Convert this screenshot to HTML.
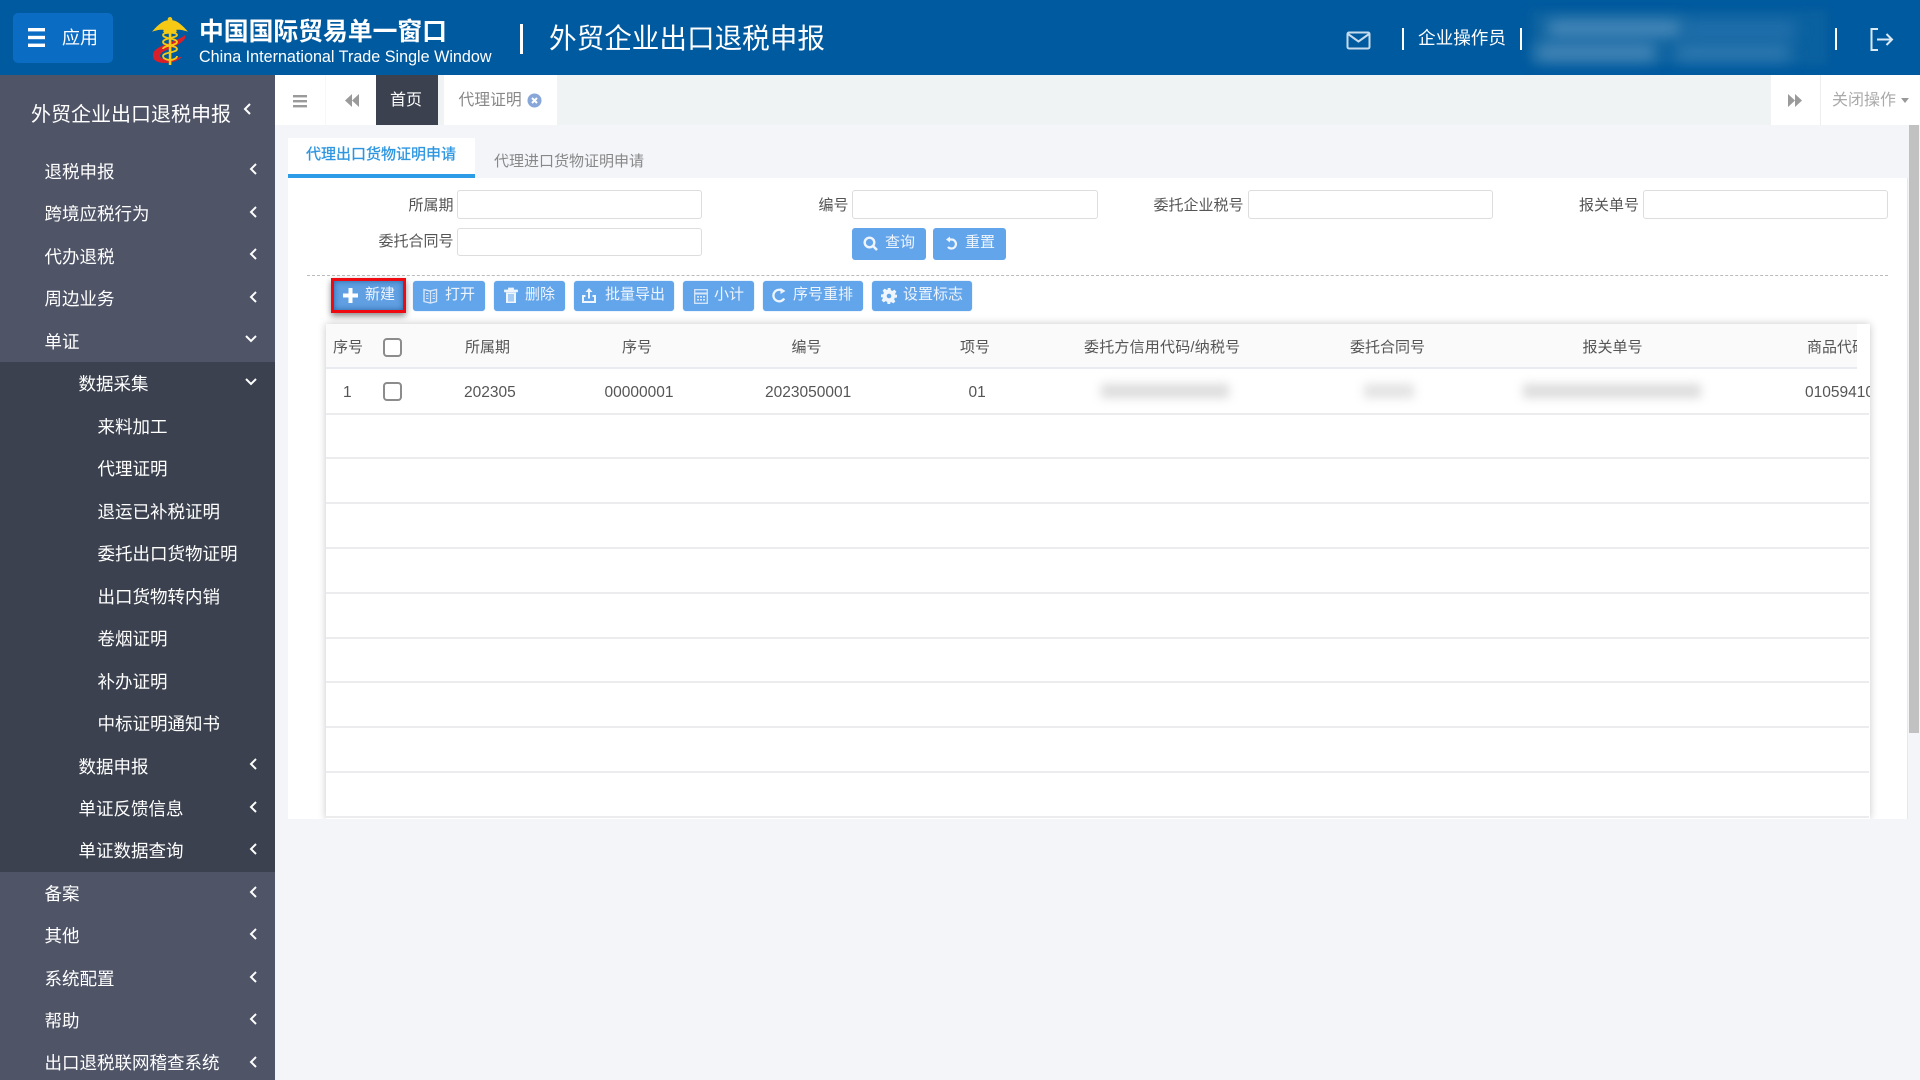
<!DOCTYPE html>
<html lang="zh"><head><meta charset="utf-8"><title>外贸企业出口退税申报</title>
<style>
*{box-sizing:border-box}
html,body{margin:0;padding:0;width:1920px;height:1080px;overflow:hidden;background:#f3f5f9;font-family:"Liberation Sans","Noto Sans CJK SC",sans-serif}
.a{position:absolute}
.t{position:absolute;white-space:nowrap;line-height:20px;height:20px}
.m{position:absolute;white-space:nowrap;line-height:24px;height:24px;color:#fff;font-size:17.5px}
.ch{position:absolute;left:249px;width:9px;height:14px}
.ch2{position:absolute;left:244px;width:14px;height:9px}
.inp{position:absolute;background:#fff;border:1px solid #ddd;border-radius:3px}
.lb{position:absolute;white-space:nowrap;font-size:15px;line-height:20px;color:#555;text-align:right}
.b{position:absolute;background:#63a5ea;border-radius:3px;top:281px;height:30px;box-shadow:0 0 1px #8ab8ea}
.bt{position:absolute;white-space:nowrap;color:#eef5fd;font-size:15px;line-height:20px;top:285px}
.ic{position:absolute}
.th{position:absolute;top:338px;font-size:15px;line-height:20px;color:#555;white-space:nowrap}
.td{position:absolute;top:383px;font-size:15.5px;line-height:20px;color:#555;white-space:nowrap}
.row{position:absolute;left:326px;width:1543px;height:2px;background:#ececee}
.cb{position:absolute;left:383px;width:19px;height:19px;border:2px solid #8c8c8c;border-radius:4px;background:#fff}
</style></head><body>

<!-- header -->
<div class="a" style="left:0;top:0;width:1920px;height:75px;background:#005a9f"></div>
<div class="a" style="left:13px;top:13px;width:100px;height:50px;background:#0b6cc4;border-radius:5px"></div>
<svg class="a" style="left:27px;top:27px" width="20" height="21" viewBox="0 0 20 21"><rect x="1" y="1" width="17" height="3.4" fill="#fff"/><rect x="1" y="8.8" width="17" height="3.4" fill="#fff"/><rect x="1" y="16.6" width="17" height="3.4" fill="#fff"/></svg>
<div class="t" style="left:62px;top:28px;font-size:18px;color:#fff">应用</div>

<svg class="a" style="left:150px;top:15px" width="40" height="52" viewBox="0 0 40 52">
<path d="M20 2c1.600 0 2.600 1.500 2.300 3.200 4 .3 9 3.500 15.700 11.600-5-1.600-8-2.400-12-1.800 1 .8 1 1.800 0 2.500h-12c-1-.7-1-1.700 0-2.500-4-.6-7 .2-12 1.800C8.700 8.700 13.700 5.500 17.700 5.200 17.400 3.500 18.400 2 20 2z" fill="#f6c915"/>
<path d="M35 20c2 4-4 8-11 12-7 3-14 5-14 9 0 3 6 4 12 3 5-1 8-2 10-2-4 4-11 6-17 6-8 0-13-3-12-9 1-5 8-8 16-11 7-3 13-5 16-8z" fill="#d81f2a"/>
<rect x="18.800" y="14" width="2.600" height="36" fill="#f6c915"/>
<path d="M13 20c0-3 14-3 14 0s-14 3-14 7 14 3 14 7-14 3-14 7c0 3 5 4 7 4M27 27c0-4-14-3-14-7M13 34c0-4 14-3 14-7M13 41c0-4 14-3 14-7M27 41c0 3-5 4-7 4" fill="none" stroke="#f6c915" stroke-width="1.800"/>
</svg>
<div class="t" style="left:199px;top:19px;height:28px;line-height:28px;font-size:24.800px;font-weight:700;color:#fff">中国国际贸易单一窗口</div>
<div class="t" style="left:199px;top:47px;font-size:16.150px;color:#fff">China International Trade Single Window</div>
<div class="a" style="left:520px;top:24px;width:3px;height:30px;background:#fff"></div>
<div class="t" style="left:549px;top:21px;height:36px;line-height:36px;font-size:27.600px;color:#fff">外贸企业出口退税申报</div>

<svg class="a" style="left:1346px;top:31px" width="26" height="19" viewBox="0 0 26 19"><rect x="1.500" y="1.500" width="22" height="16" rx="1.500" fill="none" stroke="#c6dced" stroke-width="2"/><path d="M2 3l10.500 7.500L23 3" fill="none" stroke="#c6dced" stroke-width="2"/></svg>
<div class="a" style="left:1402px;top:28px;width:2px;height:22px;background:#fff"></div>
<div class="t" style="left:1418px;top:28px;font-size:17.600px;color:#fff">企业操作员</div>
<div class="a" style="left:1520px;top:28px;width:2px;height:22px;background:#fff"></div>
<div class="a" style="left:1530px;top:10px;width:297px;height:55px;background:#0a619f;filter:blur(4px)"></div>
<div class="a" style="left:1547px;top:22px;width:135px;height:13px;background:#5d96c2;filter:blur(8px)"></div>
<div class="a" style="left:1685px;top:24px;width:110px;height:12px;background:#2e77b2;filter:blur(8px)"></div>
<div class="a" style="left:1536px;top:46px;width:120px;height:13px;background:#5a93c0;filter:blur(8px)"></div>
<div class="a" style="left:1675px;top:46px;width:115px;height:13px;background:#3b80b6;filter:blur(8px)"></div>
<div class="a" style="left:1835px;top:28px;width:2px;height:22px;background:#fff"></div>
<svg class="a" style="left:1869px;top:27px" width="26" height="25" viewBox="0 0 26 25"><path d="M9 2H2.500v21H9" fill="none" stroke="#dceaf4" stroke-width="2"/><path d="M8 12.500h15M17.500 7l5.500 5.500-5.500 5.500" fill="none" stroke="#dceaf4" stroke-width="2"/></svg>

<!-- sidebar -->
<div class="a" style="left:0;top:75px;width:275px;height:1005px;background:#4f5467"></div>
<div class="a" style="left:0;top:362px;width:275px;height:510px;background:#3b414e"></div>
<div class="t" style="left:31px;top:102px;height:26px;line-height:26px;font-size:20px;color:#fff">外贸企业出口退税申报</div>
<svg class="ch" style="left:243px;top:102px" viewBox="0 0 9 14"><path d="M7 2L2 7l5 5" fill="none" stroke="#fff" stroke-width="2"/></svg>

<div class="m" style="left:44.500px;top:160px">退税申报</div>
<div class="m" style="left:44.500px;top:202px">跨境应税行为</div>
<div class="m" style="left:44.500px;top:245px">代办退税</div>
<div class="m" style="left:44.500px;top:287px">周边业务</div>
<div class="m" style="left:44.500px;top:330px">单证</div>
<div class="m" style="left:78.500px;top:372px">数据采集</div>
<div class="m" style="left:97.500px;top:415px">来料加工</div>
<div class="m" style="left:97.500px;top:457px">代理证明</div>
<div class="m" style="left:97.500px;top:500px">退运已补税证明</div>
<div class="m" style="left:97.500px;top:542px">委托出口货物证明</div>
<div class="m" style="left:97.500px;top:585px">出口货物转内销</div>
<div class="m" style="left:97.500px;top:627px">卷烟证明</div>
<div class="m" style="left:97.500px;top:670px">补办证明</div>
<div class="m" style="left:97.500px;top:712px">中标证明通知书</div>
<div class="m" style="left:78.500px;top:755px">数据申报</div>
<div class="m" style="left:78.500px;top:797px">单证反馈信息</div>
<div class="m" style="left:78.500px;top:839px">单证数据查询</div>
<div class="m" style="left:44.500px;top:882px">备案</div>
<div class="m" style="left:44.500px;top:924px">其他</div>
<div class="m" style="left:44.500px;top:967px">系统配置</div>
<div class="m" style="left:44.500px;top:1009px">帮助</div>
<div class="m" style="left:44.500px;top:1051px">出口退税联网稽查系统</div>

<svg class="ch" style="top:162px" viewBox="0 0 9 14"><path d="M7 2L2 7l5 5" fill="none" stroke="#fff" stroke-width="2"/></svg>
<svg class="ch" style="top:205px" viewBox="0 0 9 14"><path d="M7 2L2 7l5 5" fill="none" stroke="#fff" stroke-width="2"/></svg>
<svg class="ch" style="top:247px" viewBox="0 0 9 14"><path d="M7 2L2 7l5 5" fill="none" stroke="#fff" stroke-width="2"/></svg>
<svg class="ch" style="top:290px" viewBox="0 0 9 14"><path d="M7 2L2 7l5 5" fill="none" stroke="#fff" stroke-width="2"/></svg>
<svg class="ch2" style="top:334px" viewBox="0 0 14 9"><path d="M2 2l5 5 5-5" fill="none" stroke="#fff" stroke-width="2"/></svg>
<svg class="ch2" style="top:377px" viewBox="0 0 14 9"><path d="M2 2l5 5 5-5" fill="none" stroke="#fff" stroke-width="2"/></svg>
<svg class="ch" style="top:757px" viewBox="0 0 9 14"><path d="M7 2L2 7l5 5" fill="none" stroke="#fff" stroke-width="2"/></svg>
<svg class="ch" style="top:800px" viewBox="0 0 9 14"><path d="M7 2L2 7l5 5" fill="none" stroke="#fff" stroke-width="2"/></svg>
<svg class="ch" style="top:842px" viewBox="0 0 9 14"><path d="M7 2L2 7l5 5" fill="none" stroke="#fff" stroke-width="2"/></svg>
<svg class="ch" style="top:885px" viewBox="0 0 9 14"><path d="M7 2L2 7l5 5" fill="none" stroke="#fff" stroke-width="2"/></svg>
<svg class="ch" style="top:927px" viewBox="0 0 9 14"><path d="M7 2L2 7l5 5" fill="none" stroke="#fff" stroke-width="2"/></svg>
<svg class="ch" style="top:970px" viewBox="0 0 9 14"><path d="M7 2L2 7l5 5" fill="none" stroke="#fff" stroke-width="2"/></svg>
<svg class="ch" style="top:1012px" viewBox="0 0 9 14"><path d="M7 2L2 7l5 5" fill="none" stroke="#fff" stroke-width="2"/></svg>
<svg class="ch" style="top:1055px" viewBox="0 0 9 14"><path d="M7 2L2 7l5 5" fill="none" stroke="#fff" stroke-width="2"/></svg>

<!-- tab bar -->
<div class="a" style="left:275px;top:75px;width:1645px;height:50px;background:#eff3f4"></div>
<div class="a" style="left:275px;top:75px;width:101px;height:50px;background:#fff"></div>
<div class="a" style="left:325px;top:75px;width:1px;height:50px;background:#f7f7f7"></div>
<svg class="a" style="left:293px;top:94px" width="15" height="14" viewBox="0 0 15 14"><rect y="1" width="14" height="2.400" fill="#9a9a9a"/><rect y="6" width="14" height="2.400" fill="#9a9a9a"/><rect y="11" width="14" height="2.400" fill="#9a9a9a"/></svg>
<svg class="a" style="left:344px;top:93px" width="16" height="15" viewBox="0 0 16 15"><path d="M8 1v13L1 7.500z M15 1v13L8 7.500z" fill="#9a9a9a"/></svg>
<div class="a" style="left:376px;top:75px;width:62px;height:50px;background:#3b414e"></div>
<div class="t" style="left:390px;top:91px;font-size:16px;color:#fff">首页</div>
<div class="a" style="left:444px;top:75px;width:113px;height:50px;background:#fff"></div>
<div class="t" style="left:458.500px;top:91px;font-size:15.800px;color:#888">代理证明</div>
<svg class="a" style="left:527px;top:93px" width="15" height="15" viewBox="0 0 15 15"><circle cx="7.500" cy="7.500" r="7" fill="#88a6d8"/><path d="M5 5l5 5M10 5l-5 5" stroke="#fff" stroke-width="2"/></svg>
<div class="a" style="left:1771px;top:75px;width:149px;height:50px;background:#fff"></div>
<div class="a" style="left:1820px;top:75px;width:1px;height:50px;background:#eee"></div>
<svg class="a" style="left:1787px;top:93px" width="16" height="15" viewBox="0 0 16 15"><path d="M1 1v13l7-6.500z M8 1v13l7-6.500z" fill="#9a9a9a"/></svg>
<div class="t" style="left:1832px;top:91px;font-size:16px;color:#aaa">关闭操作</div>
<div class="a" style="left:1901px;top:98px;width:0;height:0;border-left:4px solid transparent;border-right:4px solid transparent;border-top:5px solid #999"></div>

<!-- content -->
<div class="a" style="left:275px;top:125px;width:1645px;height:955px;background:#f3f5f9"></div>
<div class="a" style="left:288px;top:178px;width:1620px;height:641px;background:#fff;border-right:1px solid #e8e8e8"></div>
<div class="a" style="left:1909px;top:125px;width:10px;height:608px;background:#c1c1c1"></div>
<div class="a" style="left:288px;top:138px;width:187px;height:40px;background:#fff;border-bottom:4px solid #2e9be6"></div>
<div class="t" style="left:306px;top:145px;font-size:15px;font-weight:400;color:#2e96e0;-webkit-text-stroke:.3px #2e96e0">代理出口货物证明申请</div>
<div class="t" style="left:494px;top:152px;font-size:15px;color:#888">代理进口货物证明申请</div>

<div class="inp" style="left:457px;top:190px;width:245px;height:29px"></div>
<div class="inp" style="left:852px;top:190px;width:246px;height:29px"></div>
<div class="inp" style="left:1248px;top:190px;width:245px;height:29px"></div>
<div class="inp" style="left:1643px;top:190px;width:245px;height:29px"></div>
<div class="inp" style="left:457px;top:228px;width:245px;height:28px"></div>
<div class="lb" style="left:408.500px;top:196px">所属期</div>
<div class="lb" style="left:818.500px;top:196px">编号</div>
<div class="lb" style="left:1153.500px;top:196px">委托企业税号</div>
<div class="lb" style="left:1579px;top:196px">报关单号</div>
<div class="lb" style="left:378.500px;top:232px">委托合同号</div>

<div class="a" style="left:852px;top:228px;width:74px;height:32px;background:#63a5ea;border-radius:3px"></div>
<div class="a" style="left:933px;top:228px;width:73px;height:32px;background:#63a5ea;border-radius:3px"></div>
<svg class="ic" style="left:863px;top:236px" width="15" height="15" viewBox="0 0 15 15"><circle cx="6.500" cy="6.500" r="4.800" fill="none" stroke="#eef5fd" stroke-width="2.400"/><path d="M10 10l4 4" stroke="#eef5fd" stroke-width="2.600"/></svg>
<div class="bt" style="left:885px;top:233px">查询</div>
<svg class="ic" style="left:945px;top:236px" width="13" height="15" viewBox="0 0 13 15"><path d="M3 3.500h3.500a4.500 4.500 0 1 1-3.500 7.400" fill="none" stroke="#eef5fd" stroke-width="2.200"/><path d="M5 .5v6L1 3.500z" fill="#eef5fd"/></svg>
<div class="bt" style="left:965px;top:233px">重置</div>

<div class="a" style="left:307px;top:275px;width:1581px;height:0;border-top:1px dashed #bbb"></div>

<!-- toolbar -->
<div class="a" style="left:331px;top:278px;width:75px;height:35px;background:#5f9fe2;border:3px solid #ee0a10;box-shadow:0 3px 6px rgba(0,0,0,.45),inset 0 0 6px rgba(0,60,120,.6)"></div>
<svg class="ic" style="left:343px;top:288px" width="15" height="15" viewBox="0 0 15 15"><path d="M5.500 0h4v5.500H15v4H9.500V15h-4V9.500H0v-4h5.500z" fill="#fff"/></svg>
<div class="bt" style="left:365px">新建</div>

<div class="b" style="left:413px;width:72px"></div>
<svg class="ic" style="left:423px;top:288px" width="15" height="16" viewBox="0 0 15 16"><path d="M1 1.500l6 1.500 6.500-1.500v12L7.500 15 1 13.500z" fill="none" stroke="#d7e7f9" stroke-width="1.400"/><path d="M7.500 3v12" stroke="#d7e7f9" stroke-width="1.200"/><path d="M9.500 5.500h2.500M9.500 8h2.500M9.500 10.500h2.500M3 5.500h2.500M3 8h2.500M3 10.500h2.500" stroke="#d7e7f9" stroke-width="1"/></svg>
<div class="bt" style="left:445px">打开</div>

<div class="b" style="left:494px;width:71px"></div>
<svg class="ic" style="left:504px;top:287px" width="14" height="17" viewBox="0 0 14 17"><path d="M.5 3h13v1.800H.5zM4.500 3V1h5v2" fill="#eef5fd" stroke="#eef5fd" stroke-width=".8"/><path d="M2 5.500h10V16H2z" fill="#eef5fd"/><path d="M5 7v7.500M7 7v7.500M9 7v7.500" stroke="#63a5ea" stroke-width="1"/></svg>
<div class="bt" style="left:525px">删除</div>

<div class="b" style="left:574px;width:100px"></div>
<svg class="ic" style="left:581px;top:287px" width="16" height="17" viewBox="0 0 16 17"><path d="M8 1L4.500 5H7v6.500h2V5h2.500z" fill="#eef5fd"/><path d="M4.500 8H1v8h14V8h-3.500v2H13v4H3v-4h1.500z" fill="#eef5fd"/></svg>
<div class="bt" style="left:605px">批量导出</div>

<div class="b" style="left:683px;width:71px"></div>
<svg class="ic" style="left:694px;top:289px" width="14" height="15" viewBox="0 0 14 15"><rect x=".7" y=".7" width="12.600" height="13.600" fill="none" stroke="#d7e7f9" stroke-width="1.300"/><path d="M1 4.500h12" stroke="#d7e7f9" stroke-width="2"/><path d="M3 7h2v1.600H3zM6 7h2v1.600H6zM9 7h2v1.600H9zM3 10h2v1.600H3zM6 10h2v1.600H6zM9 10h2v1.600H9z" fill="#d7e7f9"/></svg>
<div class="bt" style="left:714px">小计</div>

<div class="b" style="left:763px;width:100px"></div>
<svg class="ic" style="left:772px;top:288px" width="15" height="15" viewBox="0 0 15 15"><path d="M12.200 10.500A5.800 5.800 0 1 1 9.500 2.200" fill="none" stroke="#eef5fd" stroke-width="2.300"/><path d="M8.500 0l5 3-5 3z" fill="#eef5fd"/></svg>
<div class="bt" style="left:793px">序号重排</div>

<div class="b" style="left:872px;width:100px"></div>
<svg class="ic" style="left:881px;top:288px" width="16" height="16" viewBox="0 0 16 16"><path d="M6.500 0h3l.4 2.300 1.500.6 2-1.300 2 2-1.300 2 .6 1.500L16 6.500v3l-2.300.4-.6 1.500 1.300 2-2 2-2-1.300-1.500.6L9.500 16h-3l-.4-2.300-1.500-.6-2 1.300-2-2 1.300-2-.6-1.500L0 9.500v-3l2.300-.4.6-1.500-1.300-2 2-2 2 1.300 1.500-.6z" fill="#eef5fd"/><circle cx="8" cy="8" r="2.300" fill="#63a5ea"/></svg>
<div class="bt" style="left:903px">设置标志</div>

<!-- table -->
<div class="a" style="left:326px;top:324px;width:1544px;height:495px;background:#fff;box-shadow:0 0 8px rgba(0,0,0,.22);clip-path:inset(-10px -10px 0 -10px)"></div>
<div class="a" style="left:326px;top:324px;width:1531px;height:43px;background:#fafafa"></div>
<div class="a" style="left:326px;top:367px;width:1531px;height:2px;background:#e8ecf0"></div>
<div class="th" style="left:333px">序号</div>
<div class="cb" style="top:338px"></div>
<div class="th" style="left:465px">所属期</div>
<div class="th" style="left:622px">序号</div>
<div class="th" style="left:791.500px">编号</div>
<div class="th" style="left:960px">项号</div>
<div class="th" style="left:1084px;letter-spacing:.2px">委托方信用代码/纳税号</div>
<div class="th" style="left:1350px">委托合同号</div>
<div class="th" style="left:1582.500px">报关单号</div>
<div class="a" style="left:1807px;top:338px;width:50px;height:20px;overflow:hidden"><div class="th" style="left:0;top:0">商品代码</div></div>

<div class="td" style="left:343px">1</div>
<div class="cb" style="top:382px"></div>
<div class="td" style="left:464px">202305</div>
<div class="td" style="left:604.500px">00000001</div>
<div class="td" style="left:765px">2023050001</div>
<div class="td" style="left:968.500px">01</div>
<div class="a" style="left:1805px;top:383px;width:65px;height:20px;overflow:hidden"><div class="td" style="left:0;top:0">01059410</div></div>
<div class="a" style="left:1101px;top:384px;width:128px;height:14px;background:#dcdcdc;filter:blur(5px)"></div>
<div class="a" style="left:1364px;top:384px;width:50px;height:14px;background:#e2e2e2;filter:blur(5px)"></div>
<div class="a" style="left:1523px;top:384px;width:178px;height:14px;background:#dcdcdc;filter:blur(5px)"></div>

<div class="row" style="top:412.500px"></div>
<div class="row" style="top:457px"></div>
<div class="row" style="top:502px"></div>
<div class="row" style="top:547px"></div>
<div class="row" style="top:592px"></div>
<div class="row" style="top:636.500px"></div>
<div class="row" style="top:681px"></div>
<div class="row" style="top:726px"></div>
<div class="row" style="top:771px"></div>
<div class="row" style="top:816px"></div>
</body></html>
